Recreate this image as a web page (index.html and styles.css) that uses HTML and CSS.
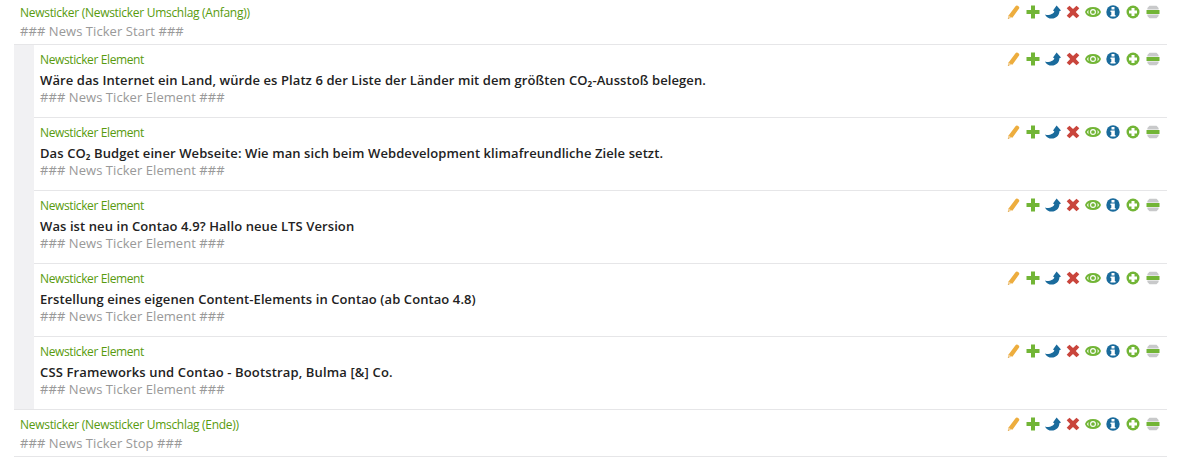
FILE: index.html
```
<!DOCTYPE html>
<html lang="de">
<head>
<meta charset="utf-8">
<title>Newsticker</title>
<link rel="stylesheet" href="styles.css">
</head>
<body>
<svg class="sprite" aria-hidden="true">
  <symbol id="edit" viewBox="0 0 16 16"><path fill="#edad3e" d="M10.500 2.200q1-1.200 2.200-.4l1 .8q1.100 1 .2 2.200l-6.500 9-4.200-1.900z"/><path fill="#f3cf95" d="M3.200 11.500l1.500.4.5 1.100 1.500.8-3.600 1.200z"/><path fill="#d99b35" d="M3 13.400l1.100.9-1.200.6z"/></symbol>
  <symbol id="new" viewBox="0 0 16 16"><path fill="#72b536" d="M6 1.500h4V6h4.500v4H10v4.500H6V10H1.500V6H6z"/></symbol>
  <symbol id="move" viewBox="0 0 16 16"><path fill="#1a6b9c" d="M11.600 1.500L16 6.500l-1.600.8C14.300 11.500 11 14.600 6.800 14.600 3.800 14.600 1 13.100 0 10.400c2.200.8 4.900.8 6.600-.3C8.300 9.300 9.300 8.300 9.300 7.300L8 6.500z"/></symbol>
  <symbol id="delete" viewBox="0 0 16 16"><path fill="#c9453c" d="M4.500 1.800L8 5.100l3.500-3.300 2.800 2.500L10.800 8l3.500 3.700-2.800 2.500L8 10.900l-3.500 3.300-2.800-2.500L5.200 8 1.700 4.300z"/></symbol>
  <symbol id="show" viewBox="0 0 16 16"><path fill="#72b536" d="M8 3c4.200 0 6.900 1.700 8 5-1.100 3.300-3.800 5-8 5s-6.900-1.700-8-5c1.100-3.300 3.800-5 8-5z"/><path fill="#fff" d="M3.600 5.900C2.800 6.400 2.300 7.100 2 8c.3.900.8 1.600 1.600 2.100-.4-1.300-.4-2.900 0-4.200zM12.400 5.900c.8.500 1.300 1.200 1.600 2.100-.3.900-.8 1.600-1.600 2.100.4-1.300.4-2.900 0-4.200z"/><circle cx="8" cy="8" r="2.400" fill="none" stroke="#fff" stroke-width="1.100"/></symbol>
  <symbol id="info" viewBox="0 0 16 16"><circle cx="8" cy="8" r="6.700" fill="#1a6b9c"/><path fill="#fff" d="M6.500 3h3v2.500h-3zM5.500 6.500h4.300V11h.7v1.500h-5V11h.8V8h-.8z"/></symbol>
  <symbol id="after" viewBox="0 0 16 16"><circle cx="8" cy="8" r="6.500" fill="#72b536"/><path fill="#fff" d="M6.500 4h3v2.500H12v3H9.500V12h-3V9.500H4v-3h2.500z"/></symbol>
  <symbol id="drag" viewBox="0 0 16 16"><path fill="#c8c9ca" d="M4.500 1.800h7L13.600 4v8l-2.100 2.200h-7L2.400 12V4z"/><path fill="#fff" d="M1 5.500h14v5H1z"/><path fill="#72b536" d="M1.500 6h13v4h-13z"/></symbol>
  <g id="tools">
    <use href="#edit" width="16" height="16"/>
    <use href="#new" x="20" width="16" height="16"/>
    <use href="#move" x="40" width="16" height="16"/>
    <use href="#delete" x="60" width="16" height="16"/>
    <use href="#show" x="80" width="16" height="16"/>
    <use href="#info" x="100" width="16" height="16"/>
    <use href="#after" x="120" width="16" height="16"/>
    <use href="#drag" x="140" width="16" height="16"/>
  </g>
</svg>
<main class="list">
  <section class="row">
    <div class="content"><div class="type wrap">Newsticker (Newsticker Umschlag (Anfang))</div><div class="note">### News Ticker Start ###</div></div>
    <svg class="tools"><use href="#tools"/></svg>
  </section>
  <div class="nested">
    <section class="row element">
      <div class="content"><div class="type">Newsticker Element</div><h2 class="headline">Wäre das Internet ein Land, würde es Platz 6 der Liste der Länder mit dem größten CO₂-Ausstoß belegen.</h2><div class="note">### News Ticker Element ###</div></div>
      <svg class="tools"><use href="#tools"/></svg>
    </section>
    <section class="row element">
      <div class="content"><div class="type">Newsticker Element</div><h2 class="headline">Das CO₂ Budget einer Webseite: Wie man sich beim Webdevelopment klimafreundliche Ziele setzt.</h2><div class="note">### News Ticker Element ###</div></div>
      <svg class="tools"><use href="#tools"/></svg>
    </section>
    <section class="row element">
      <div class="content"><div class="type">Newsticker Element</div><h2 class="headline">Was ist neu in Contao 4.9? Hallo neue LTS Version</h2><div class="note">### News Ticker Element ###</div></div>
      <svg class="tools"><use href="#tools"/></svg>
    </section>
    <section class="row element">
      <div class="content"><div class="type">Newsticker Element</div><h2 class="headline">Erstellung eines eigenen Content-Elements in Contao (ab Contao 4.8)</h2><div class="note">### News Ticker Element ###</div></div>
      <svg class="tools"><use href="#tools"/></svg>
    </section>
    <section class="row element">
      <div class="content"><div class="type">Newsticker Element</div><h2 class="headline last">CSS Frameworks und Contao - Bootstrap, Bulma [&amp;] Co.</h2><div class="note">### News Ticker Element ###</div></div>
      <svg class="tools"><use href="#tools"/></svg>
    </section>
  </div>
  <section class="row">
    <div class="content"><div class="type wrap">Newsticker (Newsticker Umschlag (Ende))</div><div class="note">### News Ticker Stop ###</div></div>
    <svg class="tools"><use href="#tools"/></svg>
  </section>
</main>
</body>
</html>
```
FILE: styles.css
```
* { box-sizing: border-box; }
html { overflow: hidden; }
body { margin: 0; background: #fff; font-family: "Open Sans", "Noto Sans", sans-serif; }
.sprite { display: none; }
.list { width: 1153px; margin: -2px 0 0 14px; }
.row { display: flex; justify-content: space-between; height: 47px; padding: 6px 6px 0; border-bottom: 1px solid #e6e6e8; white-space: nowrap; }
.nested { padding-left: 20px; border-bottom: 1px solid #e6e6e8; background: linear-gradient(to right, #f1f1f3 20px, #fff 20px); }
.element { height: 73px; }
.element:last-child { height: 72px; border-bottom: 0; }
.type { font-size: 12px; line-height: 18px; color: #589b0e; letter-spacing: -0.38px; }
.wrap { letter-spacing: -0.29px; }
.headline { margin: 2px 0 0; font-size: 13px; line-height: 18px; font-weight: 600; color: #222; letter-spacing: 0.09px; }
.last { letter-spacing: 0.14px; }
.note { font-size: 13px; line-height: 18px; color: #999; letter-spacing: 0.06px; }
.element .note { margin-top: -1px; }
.tools { width: 156px; height: 16px; flex: none; }
```
